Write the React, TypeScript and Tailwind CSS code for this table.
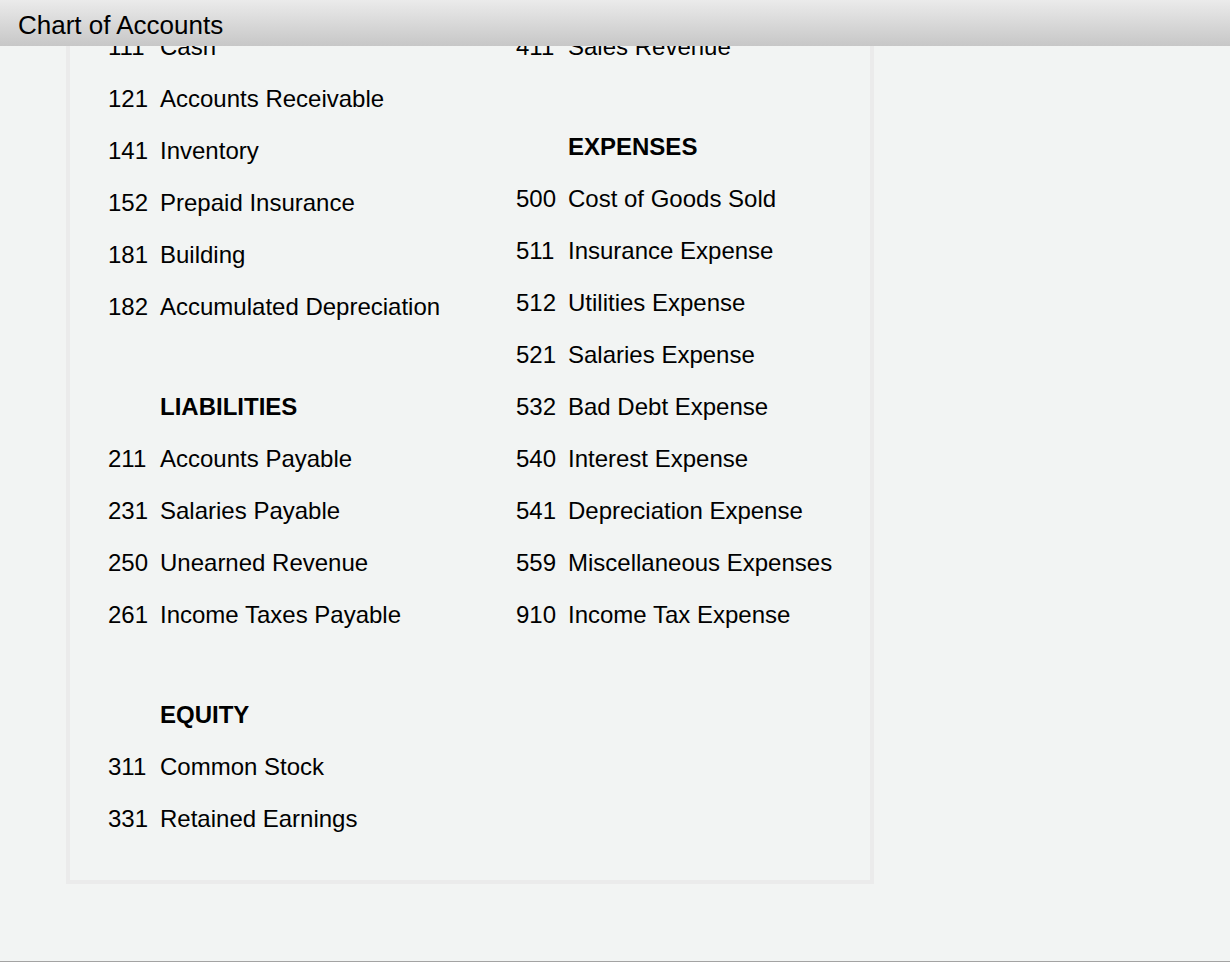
type Row =
  | { kind: "head"; label: string }
  | { kind: "acct"; no: string; name: string }
  | { kind: "gap" }

const h = (label: string): Row => ({ kind: "head", label })
const a = (no: string, name: string): Row => ({ kind: "acct", no, name })
const gap: Row = { kind: "gap" }

const leftCol: Row[] = [
  h("ASSETS"),
  a("111", "Cash"),
  a("121", "Accounts Receivable"),
  a("141", "Inventory"),
  a("152", "Prepaid Insurance"),
  a("181", "Building"),
  a("182", "Accumulated Depreciation"),
  gap,
  h("LIABILITIES"),
  a("211", "Accounts Payable"),
  a("231", "Salaries Payable"),
  a("250", "Unearned Revenue"),
  a("261", "Income Taxes Payable"),
  gap,
  h("EQUITY"),
  a("311", "Common Stock"),
  a("331", "Retained Earnings"),
]

const rightCol: Row[] = [
  h("REVENUES"),
  a("411", "Sales Revenue"),
  gap,
  h("EXPENSES"),
  a("500", "Cost of Goods Sold"),
  a("511", "Insurance Expense"),
  a("512", "Utilities Expense"),
  a("521", "Salaries Expense"),
  a("532", "Bad Debt Expense"),
  a("540", "Interest Expense"),
  a("541", "Depreciation Expense"),
  a("559", "Miscellaneous Expenses"),
  a("910", "Income Tax Expense"),
]

function AccountList({ rows }: { rows: Row[] }) {
  return (
    <div className="flex flex-col">
      {rows.map((r, i) => {
        if (r.kind === "gap") return <div key={i} className="h-[48px]" />
        if (r.kind === "head")
          return (
            <div key={i} className="pl-[52px] font-bold leading-[52px] whitespace-nowrap">
              {r.label}
            </div>
          )
        return (
          <div key={i} className="flex leading-[52px] whitespace-nowrap">
            <span className="w-[40px]">{r.no}</span>
            <span className="ml-[12px]">{r.name}</span>
          </div>
        )
      })}
    </div>
  )
}

export default function App() {
  return (
    <div className="relative h-[962px] overflow-hidden border-b border-[#a3a3a3] bg-[#f2f4f3] font-['Liberation_Sans',Arial,sans-serif] text-black">
      <header className="absolute inset-x-0 top-0 z-10 h-[46px] bg-linear-to-b from-[#ebebeb] to-[#c7c7c7] pl-[18px] pt-[4px] text-[26px] leading-[42px]">
        Chart of Accounts
      </header>

      <div className="ml-[66px] mt-[-71px] w-[808px] border-4 border-[#ebebeb] pl-[38px] pt-[36px] pb-[35px] text-[24px]">
        <div className="grid grid-cols-[408px_1fr]">
          <AccountList rows={leftCol} />
          <AccountList rows={rightCol} />
        </div>
      </div>
    </div>
  )
}
